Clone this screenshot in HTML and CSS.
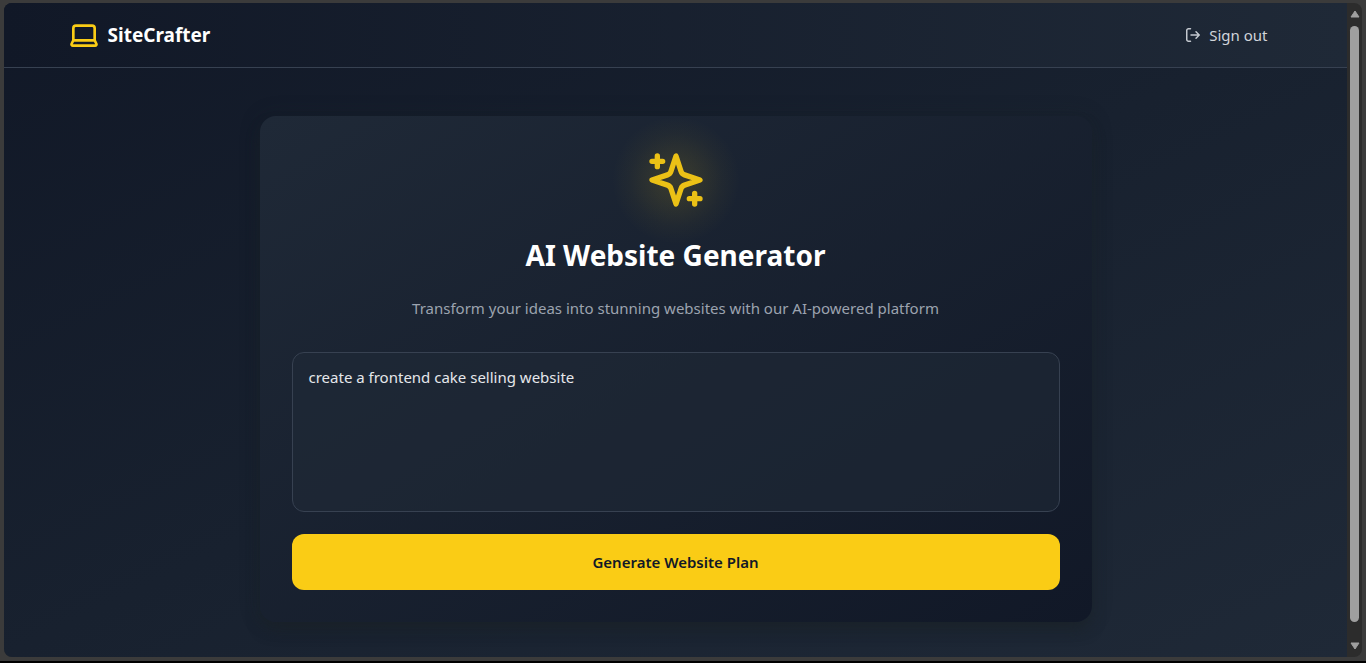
FILE: index.html
```html
<!DOCTYPE html>
<html lang="en">
<head>
<meta charset="utf-8">
<meta name="viewport" content="width=device-width, initial-scale=1">
<title>SiteCrafter</title>
<link rel="stylesheet" href="styles.css">
</head>
<body>
<div class="window">
  <div class="page">
    <header class="topbar">
      <div class="topbar-inner">
        <a class="brand" href="#">
          <svg class="brand-icon" viewBox="0 0 24 24" aria-hidden="true"><path d="M20 16V7a2 2 0 0 0-2-2H6a2 2 0 0 0-2 2v9m16 0H4m16 0 1.28 2.55a1 1 0 0 1-.9 1.45H3.62a1 1 0 0 1-.9-1.45L4 16"/></svg>
          <span>SiteCrafter</span>
        </a>
        <button class="signout" type="button">
          <svg class="signout-icon" viewBox="0 0 16 16" aria-hidden="true"><path d="M5.500 1.750H3.500a1.750 1.750 0 0 0-1.750 1.750v9a1.750 1.750 0 0 0 1.750 1.750h2M6 8h8M11 4.750 14.250 8 11 11.250"/></svg>
          <span>Sign out</span>
        </button>
      </div>
    </header>
    <main class="main">
      <form class="card">
        <div class="hero">
          <svg class="sparkles" viewBox="0 0 24 24" aria-hidden="true"><path d="m12 3-1.912 5.813a2 2 0 0 1-1.275 1.275L3 12l5.813 1.912a2 2 0 0 1 1.275 1.275L12 21l1.912-5.813a2 2 0 0 1 1.275-1.275L21 12l-5.813-1.912a2 2 0 0 1-1.275-1.275L12 3ZM5 3v4M19 17v4M3 5h4M17 19h4"/></svg>
        </div>
        <h1 class="title">AI Website Generator</h1>
        <p class="subtitle">Transform your ideas into stunning websites with our AI-powered platform</p>
        <textarea class="prompt" aria-label="Website description">create a frontend cake selling website</textarea>
        <button class="generate" type="button">Generate Website Plan</button>
      </form>
    </main>
  </div>
  <div class="scrollbar" aria-hidden="true">
    <svg class="arrow" viewBox="0 0 10 8"><path d="M5 1 9 7H1Z"/></svg>
    <div class="thumb"></div>
    <svg class="arrow" viewBox="0 0 10 8"><path d="M1 1H9L5 7Z"/></svg>
  </div>
</div>
</body>
</html>
```
FILE: styles.css
```css
* {
  box-sizing: border-box;
}

body {
  margin: 0;
  min-height: 100vh;
  display: flex;
  padding: 3px 4px 4px;
  background: #3b3b3b;
  border-bottom: 2px solid #000;
  font-family: "Segoe UI", "Noto Sans", "Open Sans", sans-serif;
  font-size: 15px;
  line-height: 24px;
  color: #fff;
}

button,
textarea {
  font: inherit;
}

.window {
  flex: 1;
  display: flex;
  border-radius: 8px;
  overflow: hidden;
  background: #2c2c2c;
}

.page {
  flex: 1;
  background: linear-gradient(to bottom right, #111827, #18212f 50%, #1f2937);
}

.topbar {
  border-bottom: 1px solid #374151;
  background: linear-gradient(to right, #111827, #1f2937);
}

.topbar-inner {
  max-width: 1280px;
  height: 64px;
  margin: 0 auto;
  padding: 0 32px;
  display: flex;
  align-items: center;
  justify-content: space-between;
}

.brand {
  display: flex;
  align-items: center;
  gap: 8px;
  color: #fff;
  font-size: 19px;
  font-weight: 700;
  text-decoration: none;
}

.brand-icon {
  width: 32px;
  height: 32px;
}

.brand-icon,
.sparkles,
.signout-icon {
  fill: none;
  stroke: #facc15;
  stroke-width: 2;
  stroke-linecap: round;
  stroke-linejoin: round;
}

.signout {
  display: flex;
  align-items: center;
  gap: 8px;
  padding: 8px 16px;
  border: 0;
  background: none;
  color: #d1d5db;
}

.signout-icon {
  width: 16px;
  height: 16px;
  stroke: #c3c8cf;
  stroke-width: 1.500;
}

.main {
  max-width: 896px;
  margin: 0 auto;
  padding: 48px 32px 35px;
}

.card {
  display: flex;
  flex-direction: column;
  padding: 32px;
  border-radius: 16px;
  background: linear-gradient(to bottom right, #1f2937, #111827);
  box-shadow: 0 10px 15px -3px rgba(26, 33, 38, 0.7), 0 0 20px rgba(26, 35, 40, 0.3);
}

.hero {
  position: relative;
  display: flex;
  justify-content: center;
  margin-bottom: 24px;
}

.hero::before {
  content: "";
  position: absolute;
  inset: -32px 0;
  background: radial-gradient(circle 64px, rgba(250, 204, 21, 0.13), rgba(250, 204, 21, 0.1) 30%, rgba(250, 204, 21, 0.03) 72%, rgba(250, 204, 21, 0));
}

.sparkles {
  position: relative;
  width: 64px;
  height: 64px;
  opacity: 0.93;
}

.title {
  margin: 0 0 22px;
  font-size: 28px;
  line-height: 38px;
  font-weight: 700;
  text-align: center;
}

.subtitle {
  margin: 0 0 32px;
  color: #9ca3af;
  text-align: center;
}

.prompt {
  display: block;
  width: 100%;
  height: 160px;
  padding: 12px 16px;
  border: 1px solid #374151;
  border-radius: 12px;
  background: rgba(31, 41, 55, 0.6);
  color: #e5e7eb;
  resize: none;
  outline: none;
}

.generate {
  margin-top: 22px;
  padding: 16px;
  border: 0;
  border-radius: 12px;
  background: #facc15;
  color: #111827;
  font-weight: 600;
}

.scrollbar {
  width: 15px;
  padding: 7px 3px;
  display: flex;
  flex-direction: column;
  align-items: center;
  gap: 8px;
}

.arrow {
  width: 10px;
  height: 8px;
  fill: #9f9f9f;
  stroke: #9f9f9f;
  stroke-linejoin: round;
}

.thumb {
  flex: 1;
  width: 9px;
  margin-bottom: 12px;
  border-radius: 5px;
  background: #9f9f9f;
}
```
